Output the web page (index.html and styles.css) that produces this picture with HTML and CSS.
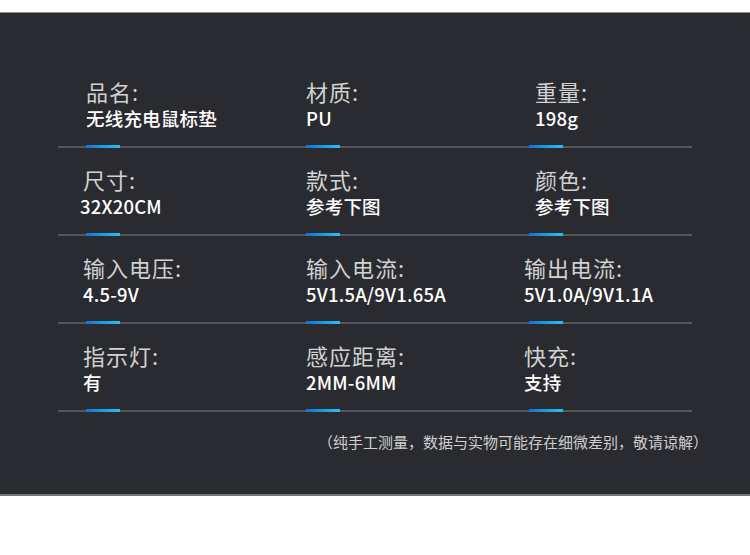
FILE: index.html
```html
<!DOCTYPE html>
<html lang="zh-CN">
<head>
<meta charset="utf-8">
<title>参数</title>
<link rel="stylesheet" href="styles.css">
</head>
<body>
<div class="panel">
  <div class="table">
    <div class="row">
      <div class="cell c1 c1-in"><div class="label">品名:</div><div class="value">无线充电鼠标垫</div><div class="accent"></div></div>
      <div class="cell c2"><div class="label">材质:</div><div class="value">PU</div><div class="accent"></div></div>
      <div class="cell c3 c3-in"><div class="label">重量:</div><div class="value">198g</div><div class="accent"></div></div>
    </div>
    <div class="row">
      <div class="cell c1"><div class="label">尺寸:</div><div class="value v-out">32X20CM</div><div class="accent"></div></div>
      <div class="cell c2"><div class="label">款式:</div><div class="value">参考下图</div><div class="accent"></div></div>
      <div class="cell c3 c3-in"><div class="label">颜色:</div><div class="value">参考下图</div><div class="accent"></div></div>
    </div>
    <div class="row">
      <div class="cell c1"><div class="label">输入电压:</div><div class="value">4.5-9V</div><div class="accent"></div></div>
      <div class="cell c2"><div class="label">输入电流:</div><div class="value">5V1.5A/9V1.65A</div><div class="accent"></div></div>
      <div class="cell c3"><div class="label">输出电流:</div><div class="value">5V1.0A/9V1.1A</div><div class="accent"></div></div>
    </div>
    <div class="row">
      <div class="cell c1"><div class="label">指示灯:</div><div class="value">有</div><div class="accent"></div></div>
      <div class="cell c2"><div class="label">感应距离:</div><div class="value">2MM-6MM</div><div class="accent"></div></div>
      <div class="cell c3"><div class="label">快充:</div><div class="value">支持</div><div class="accent"></div></div>
    </div>
  </div>
  <p class="note">（纯手工测量，数据与实物可能存在细微差别，敬请谅解）</p>
</div>
</body>
</html>
```

FILE: styles.css
```css
html, body {
  margin: 0;
  padding: 0;
  background: #ffffff;
}
body {
  font-family: "Noto Sans CJK SC", "Noto Sans", sans-serif;
}
.panel {
  margin-top: 12px;
  height: 484px;
  box-sizing: border-box;
  background: #2a2b30;
  border-top: 1px solid #8a8b8e;
  border-bottom: 2px solid #75767a;
  padding-top: 47px;
}
.table {
  margin-left: 58px;
  width: 634px;
}
.row {
  display: grid;
  grid-template-columns: 248px 222px 1fr;
  height: 88px;
}
.cell {
  display: flex;
  flex-direction: column;
  border-bottom: 2px solid #55565b;
  padding-top: 17px;
}
.label {
  font-size: 22px;
  line-height: 28px;
  letter-spacing: 1px;
  color: #d2d2d2;
}
.value {
  margin-top: 1px;
  font-size: 18.5px;
  line-height: 24px;
  letter-spacing: 0.2px;
  color: #ffffff;
  font-weight: 500;
}
.accent {
  margin-top: auto;
  margin-bottom: -2px;
  width: 34px;
  height: 3px;
  background: linear-gradient(90deg, #1a6fd9, #1fc6ef);
}
.c1 .label, .c1 .value { margin-left: 25px; }
.c1 .accent { margin-left: 28px; }
.c1-in .label, .c1-in .value { margin-left: 28px; }
.c1 .v-out { margin-left: 22px; }
.c2 .label, .c2 .value { margin-left: 0; }
.c2 .accent { margin-left: 0; }
.c3 .label, .c3 .value { margin-left: -4px; }
.c3 .accent { margin-left: 1px; }
.c3-in .label, .c3-in .value { margin-left: 7px; }
.note {
  margin: 20px 42px 0 0;
  text-align: right;
  font-size: 15px;
  line-height: 20px;
  color: #cfcfcf;
}
```
